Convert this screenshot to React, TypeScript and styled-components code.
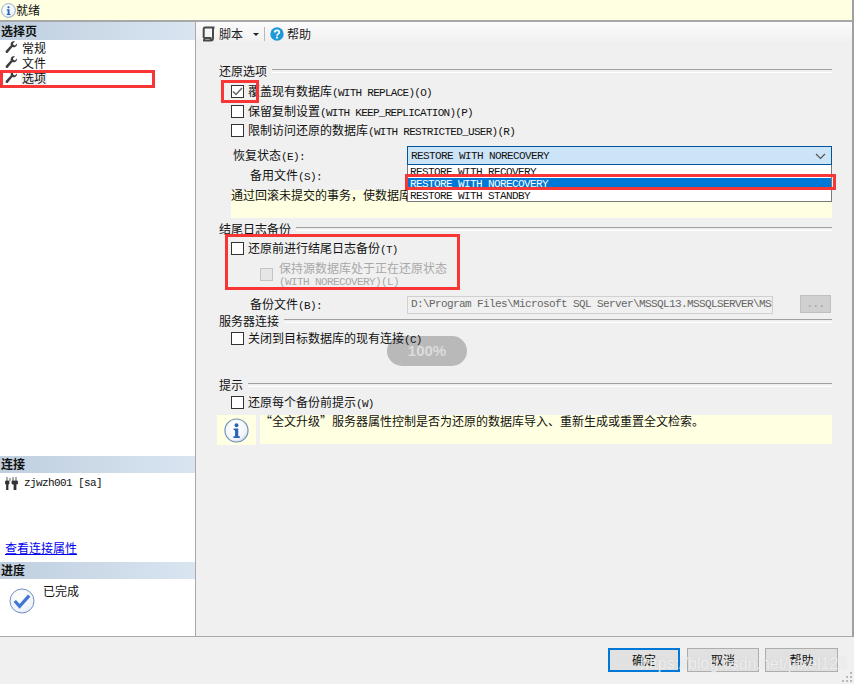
import React from 'react';
import styled, { createGlobalStyle } from 'styled-components';

const GlobalStyle = createGlobalStyle`
  html, body {
    margin: 0;
    padding: 0;
    background: #f0f0f0;
  }
  * {
    box-sizing: border-box;
  }
`;

const Page = styled.div`
  position: relative;
  width: 854px;
  height: 684px;
  overflow: hidden;
  display: flex;
  flex-direction: column;
  background: #f0f0f0;
  color: #111;
  font-family: 'Noto Sans CJK SC', 'Liberation Sans', sans-serif;
  font-size: 12px;
  line-height: 14px;
`;

const StatusBar = styled.div`
  flex: 0 0 22px;
  display: flex;
  align-items: center;
  gap: 0;
  padding-left: 1px;
  background: #ffffe1;
  border-bottom: 2px solid #a8a8a8;
  border-right: 2px solid #a0a0a0;
`;

const Main = styled.div`
  flex: 0 0 615px;
  display: flex;
  border-bottom: 1px solid #a8a8a8;
  border-right: 2px solid #a0a0a0;
`;

const Sidebar = styled.aside`
  flex: 0 0 196px;
  display: flex;
  flex-direction: column;
  background: #fff;
  border-right: 1px solid #a8a8a8;
`;

const PaneTitle = styled.div<{ $height?: number }>`
  height: ${(p) => p.$height ?? 17}px;
  padding: 0 0 1px 1px;
  display: flex;
  align-items: center;
  font-weight: 700;
  background: linear-gradient(90deg, #bfcfdf, #d9e5f1);
`;

const NavList = styled.ul`
  margin: 0;
  padding: 0 0 0 5px;
  list-style: none;
`;

const NavItem = styled.li`
  height: 15px;
  display: flex;
  align-items: center;
  gap: 3px;
`;

const NavLabel = styled.span<{ $active?: boolean }>`
  background: ${(p) => (p.$active ? '#eeeeee' : 'transparent')};
  padding: 0 1px;
`;

const Spacer = styled.div`
  flex: 1;
`;

const ConnectionBody = styled.div`
  height: 89px;
  display: flex;
  flex-direction: column;
  padding: 2px 0 0 4px;
`;

const ConnectionRow = styled.div`
  display: flex;
  align-items: center;
  gap: 6px;
  height: 16px;
`;

const Link = styled.a`
  margin-top: auto;
  margin-bottom: 7px;
  margin-left: 1px;
  color: #0000ee;
  text-decoration: underline;
`;

const ProgressBody = styled.div`
  height: 57px;
  display: flex;
  gap: 8px;
  padding: 5px 0 0 9px;
  svg {
    margin-top: 4px;
  }
`;

const Content = styled.section`
  flex: 1;
  display: flex;
  flex-direction: column;
`;

const Toolbar = styled.div`
  flex: 0 0 24px;
  display: flex;
  align-items: center;
  padding: 0 0 0 5px;
  color: #222;
  background: linear-gradient(180deg, #fbfbfb, #eeeeee);
`;

const ToolLabel = styled.span`
  margin-left: 3px;
`;

const Caret = styled.span`
  width: 0;
  height: 0;
  margin-left: 10px;
  border-left: 3px solid transparent;
  border-right: 3px solid transparent;
  border-top: 3px solid #222;
`;

const ToolDivider = styled.span`
  width: 1px;
  height: 14px;
  margin: 0 5px 0 5px;
  background: #b8b8b8;
`;

const Form = styled.div`
  flex: 1;
  display: flex;
  flex-direction: column;
  padding: 17px 20px 0 23px;
`;

const GroupHeader = styled.div<{ $top?: number }>`
  height: 16px;
  margin-top: ${(p) => p.$top ?? 0}px;
  display: flex;
  align-items: center;
  gap: 5px;
  &::after {
    content: '';
    flex: 1;
    height: 2px;
    border-top: 1px solid #a0a0a0;
    border-bottom: 1px solid #fff;
  }
`;

const Mono = styled.span`
  font-family: 'Liberation Mono', monospace;
  font-size: 11px;
  letter-spacing: -0.6px;
`;

const CheckRow = styled.label<{ $top?: number }>`
  position: relative;
  z-index: 1;
  height: 19.5px;
  margin-top: ${(p) => p.$top ?? 0}px;
  padding-left: 12px;
  display: flex;
  align-items: center;
  gap: 4px;
  white-space: nowrap;
  ${Mono} {
    letter-spacing: -0.72px;
  }
`;

const RowText = styled.span`
  padding-top: 1px;
`;

const Box = styled.span<{ $disabled?: boolean }>`
  flex: 0 0 13px;
  width: 13px;
  height: 13px;
  display: flex;
  align-items: center;
  justify-content: center;
  background: ${(p) => (p.$disabled ? '#e6e6e6' : '#fff')};
  border: 1px solid ${(p) => (p.$disabled ? '#c4c4c4' : '#333')};
`;

const FieldRow = styled.div<{ $top?: number }>`
  height: 19px;
  margin-top: ${(p) => p.$top ?? 0}px;
  display: flex;
  align-items: center;
`;

const FieldLabel = styled.span<{ $indent: number }>`
  flex: 0 0 ${(p) => 188 - p.$indent}px;
  margin-left: ${(p) => p.$indent}px;
  white-space: nowrap;
`;

const Select = styled.div`
  flex: 1;
  height: 19px;
  padding: 1px 5px 0 3px;
  display: flex;
  align-items: center;
  justify-content: space-between;
  background: #cce4f7;
  border: 1px solid #005499;
`;

const Dropdown = styled.ul`
  position: absolute;
  left: 407px;
  top: 165px;
  width: 425px;
  height: 37px;
  margin: 0;
  padding: 1px 0 0;
  overflow: hidden;
  list-style: none;
  background: #fff;
  border: 1px solid #7a7a7a;
  border-top: 0;
`;

const DropdownItem = styled.li<{ $selected?: boolean }>`
  height: 12px;
  padding-left: 2px;
  display: flex;
  align-items: center;
  background: ${(p) => (p.$selected ? '#0078d7' : 'transparent')};
  color: ${(p) => (p.$selected ? '#fff' : '#111')};
`;

const Notice = styled.div`
  height: 28px;
  margin: 5px 0 0 12px;
  background: #ffffe1;
  line-height: 10px;
  white-space: nowrap;
`;

const NestedCheck = styled.div`
  height: 26px;
  margin-top: 2.5px;
  padding-left: 41px;
  display: flex;
  align-items: center;
  gap: 6px;
  color: #a8a8a8;
`;

const NestedText = styled.div`
  display: flex;
  flex-direction: column;
`;

const NestedLine = styled.div`
  height: 12px;
  line-height: 12px;
  white-space: nowrap;
`;

const BackupRow = styled.div`
  height: 18px;
  margin-top: 9px;
  display: flex;
  align-items: center;
`;

const PathInput = styled.div`
  flex: 0 0 366px;
  height: 18px;
  padding: 0 0 2px 3px;
  display: flex;
  align-items: center;
  overflow: hidden;
  white-space: nowrap;
  color: #666;
  background: #f0f0f0;
  border: 1px solid #d0d0d0;
`;

const EllipsisButton = styled.div`
  width: 31px;
  height: 18px;
  margin: -3px 0 0 27px;
  display: flex;
  align-items: center;
  justify-content: center;
  color: #9a9a9a;
  background: #d0d0d0;
  border: 1px solid #c0c0c0;
`;

const InfoRow = styled.div`
  height: 30px;
  margin: 2.5px 0 0 -2px;
  display: flex;
  gap: 4px;
`;

const InfoIconCell = styled.div`
  flex: 0 0 39px;
  display: flex;
  align-items: center;
  justify-content: center;
  background: #ffffe1;
`;

const InfoText = styled.div`
  flex: 1;
  height: 29px;
  padding: 0;
  background: #ffffe1;
  line-height: 12px;
  white-space: nowrap;
`;

const Footer = styled.footer`
  flex: 1;
  display: flex;
  justify-content: flex-end;
  align-items: flex-start;
  gap: 6px;
  padding: 11px 16px 0 0;
`;

const Button = styled.button<{ $primary?: boolean }>`
  width: 72px;
  height: 24px;
  padding: 0;
  color: #111;
  font: inherit;
  background: #e1e1e1;
  border: ${(p) => (p.$primary ? '2px solid #0078d7' : '1px solid #adadad')};
  margin-right: ${(p) => (p.$primary ? 1 : 0)}px;
  &:last-child {
    width: 73px;
  }
`;

const Grip = styled.svg`
  position: absolute;
  right: 2px;
  bottom: 2px;
`;

const Watermark = styled.div`
  position: absolute;
  left: 640px;
  top: 654px;
  font-family: 'Liberation Sans', sans-serif;
  font-size: 16px;
  line-height: 20px;
  white-space: nowrap;
  color: rgba(255, 255, 255, 0.7);
  text-shadow: 0 0 1px rgba(170, 170, 170, 0.5);
`;

const ProgressPill = styled.div`
  position: absolute;
  left: 387px;
  top: 336px;
  width: 80px;
  height: 30px;
  display: flex;
  align-items: center;
  justify-content: center;
  border-radius: 15px;
  background: #b9b9b9;
  color: #dcdcdc;
  font-family: 'Liberation Sans', sans-serif;
  font-weight: 700;
  font-size: 15px;
`;

const RedMark = styled.div<{ $x: number; $y: number; $w: number; $h: number }>`
  position: absolute;
  z-index: 2;
  left: ${(p) => p.$x}px;
  top: ${(p) => p.$y}px;
  width: ${(p) => p.$w}px;
  height: ${(p) => p.$h}px;
  border: 3px solid #f93636;
  pointer-events: none;
`;

const WrenchIcon = () => (
  <svg width="13" height="13" viewBox="0 0 13 13">
    <path
      d="M12 2.6 9.9 4.4 8.3 3.8 8 2.2 10 .6C8.4-.1 6.5.6 5.900 2.100c-.3.800-.3 1.500 0 2.200L.9 9.800c-.5.600-.4 1.400.2 1.900.6.500 1.300.4 1.800-.2l4.500-5.400c1.800.6 3.600-.1 4.300-1.600.3-.6.400-1.300.300-1.900z"
      fill="#3d3d3d"
    />
  </svg>
);

const ScriptIcon = () => (
  <svg width="15" height="16" viewBox="0 0 15 16">
    <path
      d="M4 1.500h9.500M4 1.500c-1 0-1.300 1-1.300 2v8.500M13.500 1.500c-1 0-1.500 1-1.500 2v8.500c0 1.300-.8 2.500-2 2.500H2c1 0 1.500-1 1.500-2.500H9.500c0 1.500.5 2.500.5 2.500"
      fill="none"
      stroke="#4a4a4a"
      strokeWidth="2"
    />
  </svg>
);

const HelpIcon = () => (
  <svg width="14" height="14" viewBox="0 0 15 15">
    <circle cx="7.500" cy="7.500" r="7.200" fill="#1f9ad8" />
    <path d="M5 5.800c0-3 5-3 5-.2 0 1.800-2.500 1.800-2.500 3.700" fill="none" stroke="#fff" strokeWidth="1.800" />
    <rect x="6.500" y="10.300" width="2" height="2" fill="#fff" />
  </svg>
);

const InfoIcon = ({ size, id }: { size: number; id: string }) => (
  <svg width={size} height={size} viewBox="0 0 26 26">
    <defs>
      <radialGradient id={id} cx="0.4" cy="0.35" r="0.75">
        <stop offset="0" stopColor="#ffffff" />
        <stop offset="0.7" stopColor="#f2f5fb" />
        <stop offset="1" stopColor="#bccbe6" />
      </radialGradient>
    </defs>
    <circle cx="13" cy="13" r="12" fill={`url(#${id})`} stroke="#6f8fbd" strokeWidth="1.200" />
    <circle cx="13" cy="7.500" r="2" fill="#2a62b8" />
    <path d="M10 11h4.800v8h1.700v1.800H9.800V19h1.700v-6.200H10z" fill="#2a62b8" />
  </svg>
);

const PlugIcon = () => (
  <svg width="14" height="13" viewBox="0 0 14 13">
    <path
      d="M3 0v4M6 1v3M9 0v4M12 0v4M1.500 4h3.500v3H4v6H2.500V7H1.500zM8 4h5.500v3H12v6h-2V7H8z"
      fill="#333"
      stroke="#333"
      strokeWidth="0.800"
    />
  </svg>
);

const DoneIcon = () => (
  <svg width="26" height="26" viewBox="0 0 27 27">
    <defs>
      <radialGradient id="done-fill" cx="0.45" cy="0.35" r="0.8">
        <stop offset="0" stopColor="#ffffff" />
        <stop offset="0.7" stopColor="#eef2f9" />
        <stop offset="1" stopColor="#b4c6e4" />
      </radialGradient>
    </defs>
    <circle cx="13.500" cy="13.500" r="12.500" fill="url(#done-fill)" stroke="#6d8cbb" />
    <path d="M6 13.500l5 5.500 10-11" fill="none" stroke="#4076d6" strokeWidth="3.400" />
  </svg>
);

const Chevron = () => (
  <svg width="11" height="7" viewBox="0 0 11 7">
    <path d="M1 1l4.500 4.500L10 1" fill="none" stroke="#555" strokeWidth="1.200" />
  </svg>
);

const CheckMark = () => (
  <svg width="11" height="9" viewBox="0 0 11 9">
    <path d="M1 4.500l3 3 6-6.500" fill="none" stroke="#666" strokeWidth="1.500" />
  </svg>
);

const NAV_ITEMS = ['常规', '文件', '选项'];

export default function App() {
  return (
    <Page>
      <GlobalStyle />
      <StatusBar>
        <InfoIcon size={15} id="status-info" />
        就绪
      </StatusBar>
      <Main>
        <Sidebar>
          <PaneTitle $height={18}>选择页</PaneTitle>
          <NavList>
            {NAV_ITEMS.map((item, i) => (
              <NavItem key={item}>
                <WrenchIcon />
                <NavLabel $active={i === 2}>{item}</NavLabel>
              </NavItem>
            ))}
          </NavList>
          <Spacer />
          <PaneTitle>连接</PaneTitle>
          <ConnectionBody>
            <ConnectionRow>
              <PlugIcon />
              <Mono>zjwzh001 [sa]</Mono>
            </ConnectionRow>
            <Link>查看连接属性</Link>
          </ConnectionBody>
          <PaneTitle>进度</PaneTitle>
          <ProgressBody>
            <DoneIcon />
            <span>已完成</span>
          </ProgressBody>
        </Sidebar>
        <Content>
          <Toolbar>
            <ScriptIcon />
            <ToolLabel>脚本</ToolLabel>
            <Caret />
            <ToolDivider />
            <HelpIcon />
            <ToolLabel>帮助</ToolLabel>
          </Toolbar>
          <Form>
            <GroupHeader>还原选项</GroupHeader>
            <CheckRow $top={3}>
              <Box>
                <CheckMark />
              </Box>
              <RowText>
                覆盖现有数据库<Mono>(WITH REPLACE)(O)</Mono>
              </RowText>
            </CheckRow>
            <CheckRow>
              <Box />
              <RowText>
                保留复制设置<Mono>(WITH KEEP_REPLICATION)(P)</Mono>
              </RowText>
            </CheckRow>
            <CheckRow>
              <Box />
              <RowText>
                限制访问还原的数据库<Mono>(WITH RESTRICTED_USER)(R)</Mono>
              </RowText>
            </CheckRow>
            <FieldRow $top={5.5}>
              <FieldLabel $indent={14}>
                恢复状态<Mono>(E):</Mono>
              </FieldLabel>
              <Select>
                <Mono>RESTORE WITH NORECOVERY</Mono>
                <Chevron />
              </Select>
            </FieldRow>
            <FieldRow $top={1}>
              <FieldLabel $indent={31}>
                备用文件<Mono>(S):</Mono>
              </FieldLabel>
            </FieldRow>
            <Notice>通过回滚未提交的事务，使数据库</Notice>
            <GroupHeader $top={3}>结尾日志备份</GroupHeader>
            <CheckRow $top={2}>
              <Box />
              <RowText>
                还原前进行结尾日志备份<Mono>(T)</Mono>
              </RowText>
            </CheckRow>
            <NestedCheck>
              <Box $disabled />
              <NestedText>
                <NestedLine>保持源数据库处于正在还原状态</NestedLine>
                <NestedLine>
                  <Mono>(WITH NORECOVERY)(L)</Mono>
                </NestedLine>
              </NestedText>
            </NestedCheck>
            <BackupRow>
              <FieldLabel $indent={31}>
                备份文件<Mono>(B):</Mono>
              </FieldLabel>
              <PathInput>
                <Mono>D:\Program Files\Microsoft SQL Server\MSSQL13.MSSQLSERVER\MSS</Mono>
              </PathInput>
              <EllipsisButton>
                <Mono>...</Mono>
              </EllipsisButton>
            </BackupRow>
            <GroupHeader $top={-1}>服务器连接</GroupHeader>
            <CheckRow>
              <Box />
              <RowText>
                关闭到目标数据库的现有连接<Mono>(C)</Mono>
              </RowText>
            </CheckRow>
            <GroupHeader $top={28.5}>提示</GroupHeader>
            <CheckRow>
              <Box />
              <RowText>
                还原每个备份前提示<Mono>(W)</Mono>
              </RowText>
            </CheckRow>
            <InfoRow>
              <InfoIconCell>
                <InfoIcon size={25} id="hint-info" />
              </InfoIconCell>
              <InfoText>“全文升级”服务器属性控制是否为还原的数据库导入、重新生成或重置全文检索。</InfoText>
            </InfoRow>
          </Form>
        </Content>
      </Main>
      <Footer>
        <Button $primary>确定</Button>
        <Button>取消</Button>
        <Button>帮助</Button>
      </Footer>
      <Dropdown>
        <DropdownItem>
          <Mono>RESTORE WITH RECOVERY</Mono>
        </DropdownItem>
        <DropdownItem $selected>
          <Mono>RESTORE WITH NORECOVERY</Mono>
        </DropdownItem>
        <DropdownItem>
          <Mono>RESTORE WITH STANDBY</Mono>
        </DropdownItem>
      </Dropdown>
      <ProgressPill>100%</ProgressPill>
      <RedMark $x={0} $y={70} $w={155} $h={18} />
      <RedMark $x={221} $y={80} $w={38} $h={23} />
      <RedMark $x={405} $y={174} $w={431} $h={16} />
      <RedMark $x={225} $y={234} $w={235} $h={56} />
      <Watermark>https://blog.csdn.net/pixel123</Watermark>
      <Grip width="10" height="10" viewBox="0 0 10 10">
        <path d="M8 0h2v2H8zM4 4h2v2H4zM8 4h2v2H8zM0 8h2v2H0zM4 8h2v2H4zM8 8h2v2H8z" fill="#b8b8b8" />
      </Grip>
    </Page>
  );
}
